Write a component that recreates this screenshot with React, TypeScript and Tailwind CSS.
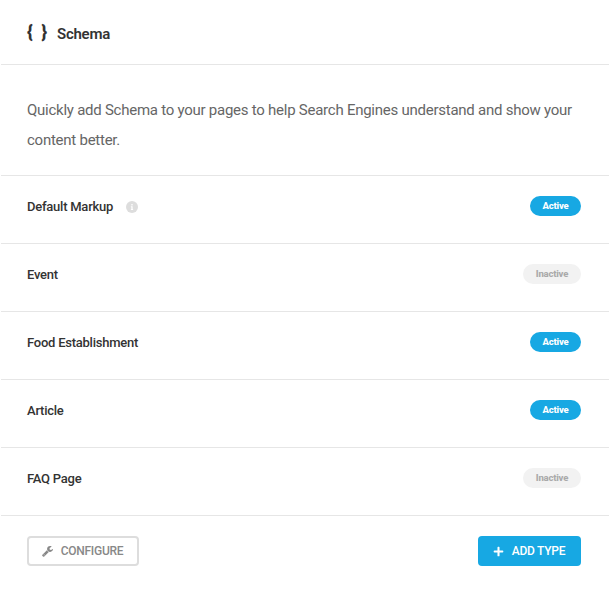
import React from 'react';
import { FaInfo, FaPlus } from 'react-icons/fa';

const schemaTypes = [
    { name: 'Default Markup', active: true, info: true },
    { name: 'Event', active: false },
    { name: 'Food Establishment', active: true },
    { name: 'Article', active: true },
    { name: 'FAQ Page', active: false },
];

export default function App() {
    return (
        <div className="h-[593px] w-[610px] overflow-hidden bg-white pr-px pl-px font-['Roboto',sans-serif] text-[#333]">
            <header className="flex h-[65px] items-center border-b border-[#e6e6e6] px-[26px]">
                <span className="flex w-5 justify-between text-[18px] leading-[30px] font-black">
                    <span>{'{'}</span>
                    <span>{'}'}</span>
                </span>
                <h2 className="ml-2.5 pt-[3px] text-[15px] leading-[30px] font-semibold tracking-[-0.25px]">Schema</h2>
            </header>

            <p className="h-[111px] border-b border-[#e6e6e6] px-[26px] pt-[30px] text-[15px] leading-[30px] tracking-[-0.25px] text-[#666]">
                Quickly add Schema to your pages to help Search Engines understand and show your content better.
            </p>

            {schemaTypes.map((type) => (
                <SchemaRow key={type.name} {...type} />
            ))}

            <footer className="flex items-center justify-between pt-5 pr-7 pl-[26px]">
                <button className="flex h-[30px] w-[112px] items-center justify-center gap-2 rounded-[4px] border-2 border-[#ddd] pr-px text-[12px] font-medium tracking-[-0.25px] text-[#888]">
                    <WrenchIcon />
                    CONFIGURE
                </button>
                <button className="flex h-[30px] w-[103px] items-center justify-center gap-2 rounded-[4px] bg-[#17a8e3] pr-px text-[12px] font-medium tracking-[-0.25px] text-white">
                    <FaPlus size={11} />
                    ADD TYPE
                </button>
            </footer>
        </div>
    );
}

function SchemaRow({ name, active, info = false }: { name: string; active: boolean; info?: boolean }) {
    return (
        <div className="flex h-[68px] items-start justify-between border-b border-[#e6e6e6] pt-5 pr-7 pl-[26px]">
            <div className="flex items-center">
                <span className="text-[13px] leading-[22px] font-medium tracking-[-0.24px]">{name}</span>
                {info && (
                    <span className="ml-[13px] flex h-3 w-3 items-center justify-center rounded-full bg-[#ddd] text-white">
                        <FaInfo size={6} />
                    </span>
                )}
            </div>
            <span
                className={`flex h-5 items-center justify-center rounded-full text-[9.5px] font-extrabold tracking-[-0.2px] ${
                    active ? 'w-[51px] bg-[#17a8e3] text-white' : 'w-[58px] bg-[#f2f2f2] text-[#aaa]'
                }`}
            >
                {active ? 'Active' : 'Inactive'}
            </span>
        </div>
    );
}

function WrenchIcon() {
    return (
        <svg width="11" height="11" viewBox="0 0 1664 1664" fill="currentColor">
            <path d="M384 1344q0-26-19-45t-45-19-45 19-19 45 19 45 45 19 45-19 19-45zm644-420l-682 682q-37 37-90 37-52 0-91-37L59 1498q-38-36-38-90 0-53 38-91l681-681q39 98 114.500 173.500T1028 924zm634-435q0 39-23 106-47 134-164.500 217.500T1216 896q-185 0-316.500-131.500T768 448t131.500-316.500T1216 0q58 0 121.500 16.500T1445 63q16 11 16 28t-16 28l-293 169v224l193 107q5-3 79-48.500t135.500-81T1630 454q15 0 23.500 10t8.500 25z" />
        </svg>
    );
}
